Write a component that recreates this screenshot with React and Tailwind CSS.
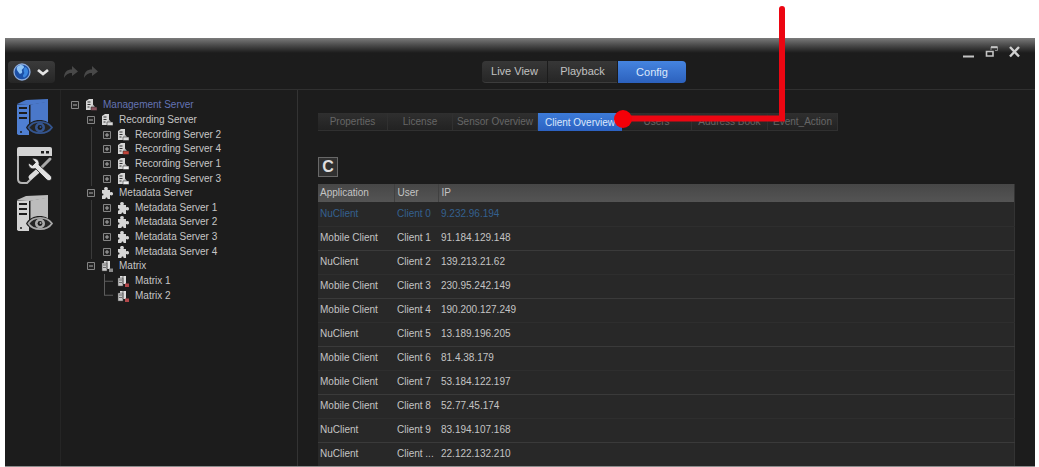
const clients = [
  { app: "NuClient", user: "Client 0", ip: "9.232.96.194", own: true },
  { app: "Mobile Client", user: "Client 1", ip: "91.184.129.148" },
  { app: "NuClient", user: "Client 2", ip: "139.213.21.62" },
  { app: "Mobile Client", user: "Client 3", ip: "230.95.242.149" },
  { app: "Mobile Client", user: "Client 4", ip: "190.200.127.249" },
  { app: "NuClient", user: "Client 5", ip: "13.189.196.205" },
  { app: "Mobile Client", user: "Client 6", ip: "81.4.38.179" },
  { app: "Mobile Client", user: "Client 7", ip: "53.184.122.197" },
  { app: "Mobile Client", user: "Client 8", ip: "52.77.45.174" },
  { app: "NuClient", user: "Client 9", ip: "83.194.107.168" },
  { app: "NuClient", user: "Client ...", ip: "22.122.132.210" },
];

const tree = [
  { level: 0, icon: "server", badge: "#8a5560", label: "Management Server", active: true },
  { level: 1, icon: "server", badge: "#d8d8d8", label: "Recording Server" },
  { level: 2, icon: "server", badge: "#d8d8d8", label: "Recording Server 2", closed: true },
  { level: 2, icon: "server", badge: "#c0443a", label: "Recording Server 4", closed: true },
  { level: 2, icon: "server", badge: "#f0f0f0", label: "Recording Server 1", closed: true },
  { level: 2, icon: "server", badge: "#f0f0f0", label: "Recording Server 3", closed: true },
  { level: 1, icon: "puzzle", label: "Metadata Server" },
  { level: 2, icon: "puzzle", label: "Metadata Server 1", closed: true },
  { level: 2, icon: "puzzle", label: "Metadata Server 2", closed: true },
  { level: 2, icon: "puzzle", label: "Metadata Server 3", closed: true },
  { level: 2, icon: "puzzle", label: "Metadata Server 4", closed: true },
  { level: 1, icon: "matrix", badge: "#8a8a8a", label: "Matrix" },
  { level: 2, icon: "matrix", badge: "#b0474a", label: "Matrix 1", leaf: true },
  { level: 2, icon: "matrix", badge: "#b0474a", label: "Matrix 2", leaf: true, last: true },
];

const tabs = [
  { label: "Properties", width: "w-[70px]" },
  { label: "License", width: "w-[65px]" },
  { label: "Sensor Overview", width: "w-[85px]" },
  { label: "Client Overview", width: "w-[84px]", active: true },
  { label: "Users", width: "w-[70px]" },
  { label: "Address Book", width: "w-[76px]" },
  { label: "Event_Action", width: "w-[70px]" },
];

const ServerEyeIcon = ({ color, side, eye }) => (
  <svg viewBox="0 0 37 40" className="h-10 w-[37px]">
    <path d="M1 6 10 2l22-1v3l-19 3z" fill={side} />
    <path d="M1 6.500h12V37H2.500L1 36z" fill={color} />
    <path d="M14.500 6.500 32 3.500V25H14.500z" fill={side} />
    <path d="M3 10h8M3 15h8M3 20h8" stroke="#1c1c1c" strokeWidth="2" />
    <circle cx="5" cy="34" r="1" fill="#1c1c1c" />
    <path d="M10 29.500C15 19.500 32 19.500 37 29.500 32 39 15 39 10 29.500z" fill="#1c1c1c" />
    <path
      d="M12.500 29.500C17 22 31 22 36 29.500 31 37 17 37 12.500 29.500z"
      fill="#242424"
      stroke={eye}
      strokeWidth="1.800"
    />
    <circle cx="24" cy="29.500" r="5" fill={eye} />
    <circle cx="24" cy="29.500" r="2.400" fill="#1c1c1c" />
    <circle cx="24.500" cy="29" r="1" fill={eye} />
  </svg>
);

const ToolsIcon = () => (
  <svg viewBox="0 0 37 40" className="h-10 w-[37px]">
    <path d="M1 3q0-2 2-2h31q2 0 2 2v7H1z" fill="#d4d4d4" />
    <path d="M25 5h3v2.500h-3zM30 5h3v2.500h-3z" fill="#1c1c1c" />
    <path d="M2 10v23q0 4 4 4h5l5-5" fill="none" stroke="#b5b5b5" strokeWidth="2" />
    <path d="M34 13 25 22" stroke="#a8a8a8" strokeWidth="3" strokeLinecap="round" />
    <path d="m24 23-9 8" stroke="#dcdcdc" strokeWidth="5" strokeLinecap="round" />
    <path
      d="M16 12.500c4-1 8 2 7 6.500l12 11c2 3-1 6-4 4L19.500 22.500c-4 1.500-7.500-1.500-7-5.500l4 2.500 3-3z"
      fill="#e2e2e2"
      stroke="#1c1c1c"
      strokeWidth="0.800"
    />
  </svg>
);

const TreeIcon = ({ type, badge }) => {
  if (type === "puzzle") {
    return (
      <svg viewBox="0 0 12 12" className="size-3">
        <path
          d="M1 3h2.500C2.500 1 3.500 0 5 0s2.500 1 1.500 3H9v2.500c2-1 3 0 3 1.300S11 9 9 8v4H6.500c.5-2-2.500-2-2 0H1V8.500c2 .5 2-2.500 0-2z"
          fill="#d6d6d6"
        />
      </svg>
    );
  }
  if (type === "matrix") {
    return (
      <svg viewBox="0 0 12 12" className="size-3">
        <path d="M3 1h6v8H3z" fill="#dedede" />
        <path d="M1 3h5v8H1z" fill="#c9c9c9" stroke="#444" strokeWidth="0.500" />
        <path d="M2 5h3M2 7.500h3M6 1v8" stroke="#444" strokeWidth="0.700" />
        <path d="M8 8.500h4V12H8z" fill={badge} />
      </svg>
    );
  }
  return (
    <svg viewBox="0 0 12 12" className="size-3">
      <path d="M1 2 4 0h4v11H1z" fill="#d6d6d6" />
      <path d="M2.500 3h3M2.500 5.500h3M2.500 8h2" stroke="#333" />
      <path d="M6 8 8 5.500 10 8z" fill="#bdbdbd" />
      <path d="M6 8h6v3.500H6z" fill={badge} stroke="#222" strokeWidth="0.500" />
    </svg>
  );
};

const Expander = ({ closed }) => (
  <svg viewBox="0 0 8 8" className="size-2">
    <path d="M.5.5h7v7h-7z" fill="#222" stroke="#858585" />
    <path d={closed ? "M2 4h4M4 2v4" : "M2 4h4"} stroke="#aaa" />
  </svg>
);

const Connector = ({ last }) => (
  <svg viewBox="0 0 10 14" className="h-full w-2.5" preserveAspectRatio="none">
    <path d={last ? "M1.500 0v7H10" : "M1.500 0v14M1.500 7H10"} fill="none" stroke="#5c5c5c" />
  </svg>
);

const TreeRow = ({ node }) => (
  <li className="flex min-h-0 flex-1 items-center">
    {node.level > 0 && <span className="w-4" />}
    {node.level > 1 && (
      <span className={`ml-1 h-full w-3 ${node.leaf ? "" : "border-l border-[#3a3a3a]"}`} />
    )}
    <span className="flex h-full w-3.5 items-center">
      {node.leaf ? <Connector last={node.last} /> : <Expander closed={node.closed} />}
    </span>
    <TreeIcon type={node.icon} badge={node.badge} />
    <a
      href="#"
      className={`ml-1.5 whitespace-nowrap text-[10px] leading-[14px] ${
        node.active ? "text-[#6373b4]" : "text-[#c6c6c6]"
      }`}
    >
      {node.label}
    </a>
  </li>
);

const TitleBar = () => (
  <div className="flex h-[23px] justify-end gap-2.5 bg-linear-to-b from-[#7b7b7b] to-[#1c1c1c] to-65% pt-1 pr-3.5">
    <button aria-label="Minimize">
      <svg viewBox="0 0 13 14" className="h-3.5 w-[13px]">
        <path d="M1 11.500h11" stroke="#c4c4c4" strokeWidth="2" />
      </svg>
    </button>
    <button aria-label="Restore">
      <svg viewBox="0 0 13 14" className="h-3.5 w-[13px]">
        <path d="M6 5V2h6.500v3.500H10" fill="none" stroke="#8c8c8c" strokeWidth="1" />
        <path d="M6 2.200h6.500" stroke="#c4c4c4" strokeWidth="2" />
        <path d="M1.500 6.500H8V11H1.500z" fill="none" stroke="#c4c4c4" strokeWidth="1.600" />
      </svg>
    </button>
    <button aria-label="Close">
      <svg viewBox="0 0 13 14" className="h-3.5 w-[13px]">
        <path d="m2 2 9 9.500M11 2l-9 9.500" stroke="#d0d0d0" strokeWidth="2.400" />
      </svg>
    </button>
  </div>
);

const RedoIcon = () => (
  <svg viewBox="0 0 16 14" className="h-3.5 w-4">
    <path d="M1 13C1 7 4 4.500 9 4.500V1l6 5.500L9 11V8C5 8 3 9.500 1 13z" fill="#484848" />
  </svg>
);

const Toolbar = () => (
  <div className="flex h-[29px] items-start border-b border-[#303030]">
    <div className="flex w-[477px] items-center gap-1 pl-[3px]">
      <button
        aria-label="Application menu"
        className="mr-1 flex h-[22px] w-[47px] items-center gap-1.5 rounded bg-linear-to-b from-[#3b3b3b] to-[#262626] pl-[5px]"
      >
        <svg viewBox="0 0 18 18" className="size-[18px]">
          <circle cx="9" cy="9" r="8" fill="#1c4fa5" stroke="#8ba9d8" strokeWidth="1.300" />
          <path d="M4 4c3-3 7-2 7 0S8 6 9 8s-2 4-3 2-3-3-2-6z" fill="#8fc4f6" />
          <path d="M12 4c3 1 4 5 2 8s-4 3-4 1 2-2 1-4 0-4 1-5z" fill="#3b86df" />
        </svg>
        <svg viewBox="0 0 12 8" className="h-2 w-3">
          <path d="m1 2 5 4 5-4" fill="none" stroke="#e4e4e4" strokeWidth="2.800" />
        </svg>
      </button>
      <button aria-label="Undo">
        <RedoIcon />
      </button>
      <button aria-label="Redo">
        <RedoIcon />
      </button>
    </div>
    <nav className="flex h-[22px] gap-px text-[11px] text-[#c2c2c2]">
      <button className="w-[65px] rounded-l border-b border-[#3c3c3c] bg-linear-to-b from-[#373737] to-[#262626]">
        Live View
      </button>
      <button className="w-[69px] border-b border-[#3c3c3c] bg-linear-to-b from-[#373737] to-[#262626]">
        Playback
      </button>
      <button className="w-[68px] rounded-r bg-linear-to-b from-[#4584e0] to-[#2c61bd] text-[#dce8fb]">
        Config
      </button>
    </nav>
  </div>
);

const ClientTable = () => (
  <table className="w-full table-fixed border-r border-[#333] bg-[#282828] text-left text-[10px] leading-3 text-[#c4c4c4]">
    <colgroup>
      <col className="w-[76px]" />
      <col className="w-11" />
      <col />
    </colgroup>
    <thead className="bg-linear-to-b from-[#474747] to-[#545454]">
      <tr className="h-[18px]">
        <th className="border-r border-[#404040] pl-0.5 font-normal">Application</th>
        <th className="border-r border-[#404040] pl-[3px] font-normal">User</th>
        <th className="pl-[3px] font-normal">IP</th>
      </tr>
    </thead>
    <tbody>
      {clients.map((client) => (
        <tr
          key={client.ip}
          className={`h-6 border-b border-[#2e2e2e] last:border-b-0 even:border-[#3a3a3a] ${
            client.own ? "text-[#34608f]" : ""
          }`}
        >
          <td className="pl-0.5">{client.app}</td>
          <td className="pl-[3px] whitespace-nowrap">{client.user}</td>
          <td className="pl-[3px]">{client.ip}</td>
        </tr>
      ))}
    </tbody>
  </table>
);

// red pointer down to the Client Overview tab
const Callout = () => (
  <svg viewBox="0 0 180 130" className="pointer-events-none absolute top-0 left-[610px] h-[130px] w-[180px]">
    <path d="M172 9v109.500H13" fill="none" stroke="#ec0612" strokeWidth="6" strokeLinecap="round" />
    <circle cx="13" cy="119" r="9" fill="#f50008" />
  </svg>
);

export default function App() {
  return (
    <div className="relative flex min-h-screen flex-col bg-white pr-1 pl-[5px] pt-[38px] font-['Liberation_Sans',Arial,sans-serif]">
      <div className="flex flex-1 flex-col border-b border-[#8c8c8c] bg-[#1c1c1c]">
        <TitleBar />
        <Toolbar />
        <div className="flex flex-1">
          <aside className="flex w-14 flex-col gap-2 border-r border-[#252525] pt-2 pl-[11px]">
            <button aria-label="Servers">
              <ServerEyeIcon color="#4f7fd2" side="#4a78ca" eye="#34558f" />
            </button>
            <button aria-label="Settings">
              <ToolsIcon />
            </button>
            <button aria-label="Devices">
              <ServerEyeIcon color="#d2d2d2" side="#bcbcbc" eye="#a8a8a8" />
            </button>
          </aside>
          <aside className="w-[237px] border-r border-[#333] pt-2 pl-2.5">
            <ul className="flex h-[205px] flex-col">
              {tree.map((node) => (
                <TreeRow key={node.label} node={node} />
              ))}
            </ul>
          </aside>
          <main className="min-w-0 flex-1 pt-[23px] pr-5 pl-5">
            <div className="flex h-[18px] text-[10px]">
              {tabs.map((tab) => (
                <button
                  key={tab.label}
                  className={`shrink-0 whitespace-nowrap ${tab.width} ${
                    tab.active
                      ? "bg-linear-to-b from-[#3d7bd8] to-[#2c62c2] text-[#dce8fb]"
                      : "border-r border-b border-[#303030] bg-linear-to-b from-[#2f2f2f] to-[#222] text-[#666]"
                  }`}
                >
                  {tab.label}
                </button>
              ))}
            </div>
            <button
              aria-label="Refresh"
              className="mt-[26px] mb-[7px] flex size-5 items-center justify-center border border-[#686868] bg-[#303030] text-base font-bold text-[#dedede]"
            >
              C
            </button>
            <ClientTable />
          </main>
        </div>
      </div>
      <Callout />
    </div>
  );
}
